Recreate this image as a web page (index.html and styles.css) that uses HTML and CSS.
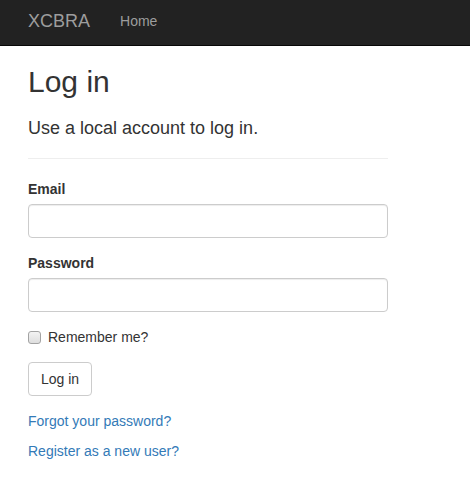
FILE: index.html
```html
<!DOCTYPE html>
<html lang="en">
<head>
<meta charset="utf-8">
<title>Log in - XCBRA</title>
<link rel="stylesheet" href="styles.css">
</head>
<body>
<header class="navbar">
  <a class="brand" href="#">XCBRA</a>
  <a class="nav-link" href="#">Home</a>
</header>
<main class="container">
  <h2 class="title">Log in</h2>
  <section class="login">
    <h4 class="subtitle">Use a local account to log in.</h4>
    <hr class="divider">
    <form class="form">
      <div class="form-group">
        <label class="field-label" for="email">Email</label>
        <input class="form-control" id="email" type="email">
      </div>
      <div class="form-group">
        <label class="field-label" for="password">Password</label>
        <input class="form-control" id="password" type="password">
      </div>
      <div class="form-group">
        <label class="check-label"><input class="check" type="checkbox"> Remember me?</label>
      </div>
      <div class="form-group">
        <button class="btn" type="button">Log in</button>
      </div>
      <p class="link-row"><a class="link" href="#">Forgot your password?</a></p>
      <p class="link-row"><a class="link" href="#">Register as a new user?</a></p>
    </form>
  </section>
</main>
</body>
</html>
```

FILE: styles.css
```css
* { box-sizing: border-box; }
html, body { margin: 0; padding: 0; background: #fff; }
body {
  font-family: "Liberation Sans", Arial, Helvetica, sans-serif;
  font-size: 14px;
  line-height: 20px;
  color: #333;
}
.navbar {
  display: flex;
  align-items: flex-start;
  height: 46px;
  padding: 11px 0 0 13px;
  background: #222;
  border-bottom: 1px solid #080808;
}
.brand {
  font-size: 18px;
  line-height: 20px;
  color: #9d9d9d;
  text-decoration: none;
  padding: 0 15px;
}
.nav-link {
  font-size: 14px;
  line-height: 20px;
  color: #9d9d9d;
  text-decoration: none;
  padding: 0 15px;
}
.container {
  padding: 0 28px;
  box-sizing: content-box;
  width: 360px;
}
.title {
  font-size: 30px;
  font-weight: 500;
  line-height: 33px;
  margin: 19px 0 20px;
}
.subtitle {
  font-size: 18px;
  font-weight: 500;
  line-height: 20px;
  margin: 0;
}
.divider {
  margin: 20px 0;
  border: 0;
  border-top: 1px solid #eee;
  height: 0;
}
.form { margin: 0; }
.form-group { margin-bottom: 15px; }
.field-label {
  display: block;
  font-weight: bold;
  margin-bottom: 5px;
}
.form-control {
  display: block;
  width: 100%;
  height: 34px;
  padding: 6px 12px;
  font: inherit;
  color: #555;
  background: #fff;
  border: 1px solid #ccc;
  border-radius: 4px;
  box-shadow: inset 0 1px 1px rgba(0,0,0,.075);
  margin: 0;
}
.check-label {
  display: flex;
  align-items: center;
  gap: 7px;
  font-weight: normal;
  height: 20px;
}
.check {
  appearance: none;
  -webkit-appearance: none;
  width: 13px;
  height: 13px;
  margin: 0;
  border: 1px solid #a3a3a3;
  border-radius: 3px;
  background: linear-gradient(#f3f3f3, #dedede);
}
.btn {
  display: inline-block;
  height: 34px;
  padding: 6px 12px;
  font: inherit;
  color: #333;
  background: #fff;
  border: 1px solid #ccc;
  border-radius: 4px;
  margin: 0;
}
.link-row { margin: 0 0 10px; }
.link { color: #337ab7; text-decoration: none; }
```
